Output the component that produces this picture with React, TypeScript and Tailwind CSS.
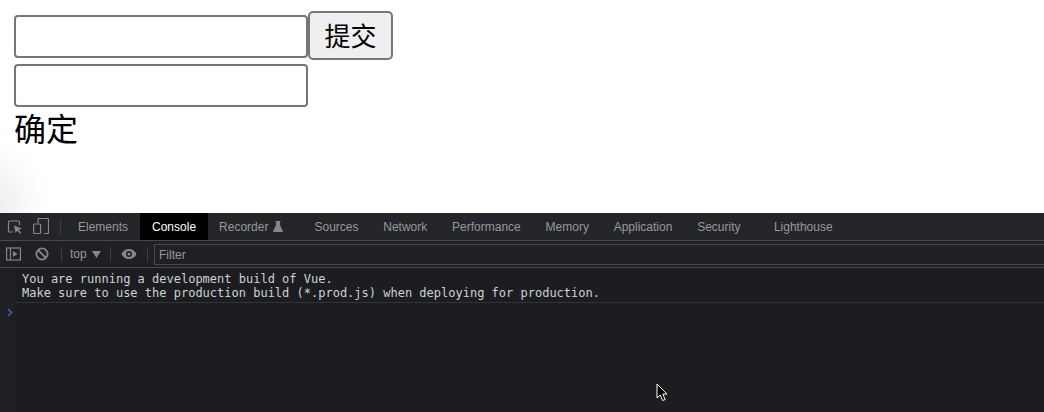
const sans = "font-['Liberation_Sans','Noto_Sans_CJK_SC',sans-serif]";

const tabs = ["Sources", "Network", "Performance", "Memory", "Application", "Security"];

function InspectIcon() {
  return (
    <svg width="16" height="16" viewBox="0 0 16 16" fill="none" stroke="#85878c" strokeWidth="1.2">
      <path d="M6 13H2.500a1 1 0 0 1-1-1V3a1 1 0 0 1 1-1h9a1 1 0 0 1 1 1v3" />
      <path d="M7 6.500l8 3-3.300 1.200 2.500 3-1.300 1-2.400-3L8.500 14z" fill="#85878c" stroke="none" />
    </svg>
  );
}

function DeviceIcon() {
  return (
    <svg width="16" height="17" viewBox="0 0 16 17" fill="none" stroke="#85878c" strokeWidth="1.2">
      <path d="M5 5V1.500a1 1 0 0 1 1-1h8.500a1 1 0 0 1 1 1v13a1 1 0 0 1-1 1H11" />
      <rect x="0.600" y="6" width="7" height="9.500" rx="1" />
    </svg>
  );
}

function SidebarIcon() {
  return (
    <svg width="15" height="14" viewBox="0 0 15 14" fill="none">
      <rect x="0.600" y="1" width="13.800" height="12" stroke="#85878c" strokeWidth="1.200" />
      <path d="M4.500 1v12" stroke="#85878c" strokeWidth="1.200" />
      <path d="M7 4l4.500 3L7 10z" fill="#85878c" />
    </svg>
  );
}

function BlockIcon() {
  return (
    <svg width="14" height="14" viewBox="0 0 14 14" fill="none" stroke="#85878c" strokeWidth="1.800">
      <circle cx="7" cy="7" r="5.600" />
      <path d="M3 3l8 8" />
    </svg>
  );
}

function EyeIcon() {
  return (
    <svg width="16" height="12" viewBox="0 0 16 12">
      <path
        fillRule="evenodd"
        fill="#85878c"
        d="M8 1C4.500 1 1.700 3.100.500 6c1.200 2.900 4 5 7.500 5s6.300-2.100 7.500-5C14.300 3.100 11.500 1 8 1zm0 8a3 3 0 1 1 0-6 3 3 0 0 1 0 6zm0-1.500a1.500 1.500 0 1 0 0-3 1.500 1.500 0 0 0 0 3z"
      />
    </svg>
  );
}

function FlaskIcon() {
  return (
    <svg width="10" height="11" viewBox="0 0 10 11" fill="#85878c">
      <path d="M2.500 0h5v1H7v3l3 6.500V11H0v-.5L3 4V1h-.5z" />
    </svg>
  );
}

function CaretIcon() {
  return (
    <svg width="9" height="7" viewBox="0 0 9 7" fill="#85878c">
      <path d="M0 0h9L4.500 7z" />
    </svg>
  );
}

function Divider() {
  return <div className="w-px h-[15px] bg-[#3e3f42]" />;
}

export default function App() {
  return (
    <div className={`${sans} w-[1044px] h-[412px] overflow-hidden flex flex-col bg-white`}>
      {/* page */}
      <div className="relative h-[213px] pl-[14px] pt-[11px] shrink-0 text-black">
        <div className="absolute left-[-46px] bottom-[-40px] w-[70px] h-[90px] rounded-full bg-[#f0f0f0] blur-[14px]" />
        <div className="relative flex flex-col items-start">
          <div className="flex items-start">
            <input className="w-[294px] h-[43px] mt-[4px] border-2 border-[#767676] rounded-[4px] bg-white" />
            <button className="w-[85px] h-[49px] border-2 border-[#767676] rounded-[5px] bg-[#efefef] text-[26px] leading-none pt-[2px]">
              提交
            </button>
          </div>
          <input className="w-[294px] h-[43px] mt-[4px] border-2 border-[#767676] rounded-[4px] bg-white" />
          <div className="text-[32px] leading-[38px] mt-[4px]">确定</div>
        </div>
      </div>

      {/* devtools */}
      <div className="flex-1 flex flex-col bg-[#1c1d20] relative">
        <div className="h-[28px] flex items-center bg-[#242529] border-b border-[#47484b] text-[12px] text-[#96999e] shrink-0">
          <div className="w-[60px] flex items-center gap-[10px] pl-[7px] shrink-0">
            <InspectIcon />
            <DeviceIcon />
          </div>
          <Divider />
          <div className="flex items-center h-full ml-[5px]">
            <span className="px-3">Elements</span>
            <span className="h-full px-3 flex items-center bg-black text-white">Console</span>
            <span className="w-[94px] pl-[11px] flex items-center gap-[5px]">
              Recorder <FlaskIcon />
            </span>
            {tabs.map((t) => (
              <span key={t} className="px-[12.4px]">
                {t}
              </span>
            ))}
            <span className="ml-[9px] px-3">Lighthouse</span>
          </div>
        </div>
        <div className="h-[27px] flex items-center bg-[#1f2023] border-b border-[#47484b] text-[12px] text-[#96999e] shrink-0">
          <div className="flex items-center gap-[14px] pl-[6px]">
            <SidebarIcon />
            <BlockIcon />
          </div>
          <div className="ml-[12px]">
            <Divider />
          </div>
          <span className="ml-[8px] flex items-center gap-[5px] w-[40px]">
            top <CaretIcon />
          </span>
          <Divider />
          <div className="mx-[10px]">
            <EyeIcon />
          </div>
          <Divider />
          <div className="ml-[6px] flex-1 h-[21px] mt-[1px] flex items-center pl-[4px] border-y border-l border-[#47484b]">Filter</div>
        </div>
        <div className="flex-1 flex">
          <div className="w-[15px] bg-[#1f2023] shrink-0 pt-[40px] pl-[7px]">
            <svg width="6" height="9" viewBox="0 0 6 9" fill="none" stroke="#2f68b8" strokeWidth="1.600">
              <path d="M1 1l3.500 3.500L1 8" />
            </svg>
          </div>
          <div className="flex-1 pt-[4px]">
            <div className="pl-[7px] pb-[2px] border-b border-[#323336] font-['DejaVu_Sans_Mono',monospace] text-[12px] leading-[14px] text-[#cfd1d4]">
              <div>You are running a development build of Vue.</div>
              <div>Make sure to use the production build (*.prod.js) when deploying for production.</div>
            </div>
          </div>
        </div>
        {/* mouse pointer from the recording */}
        <svg className="absolute left-[656px] top-[170px]" width="13" height="19" viewBox="0 0 13 19">
          <path d="M1 1v14l3.300-3 2.300 5.500 2.500-1-2.300-5.400H11z" fill="#000" stroke="#fff" strokeWidth="1" />
        </svg>
      </div>
    </div>
  );
}
